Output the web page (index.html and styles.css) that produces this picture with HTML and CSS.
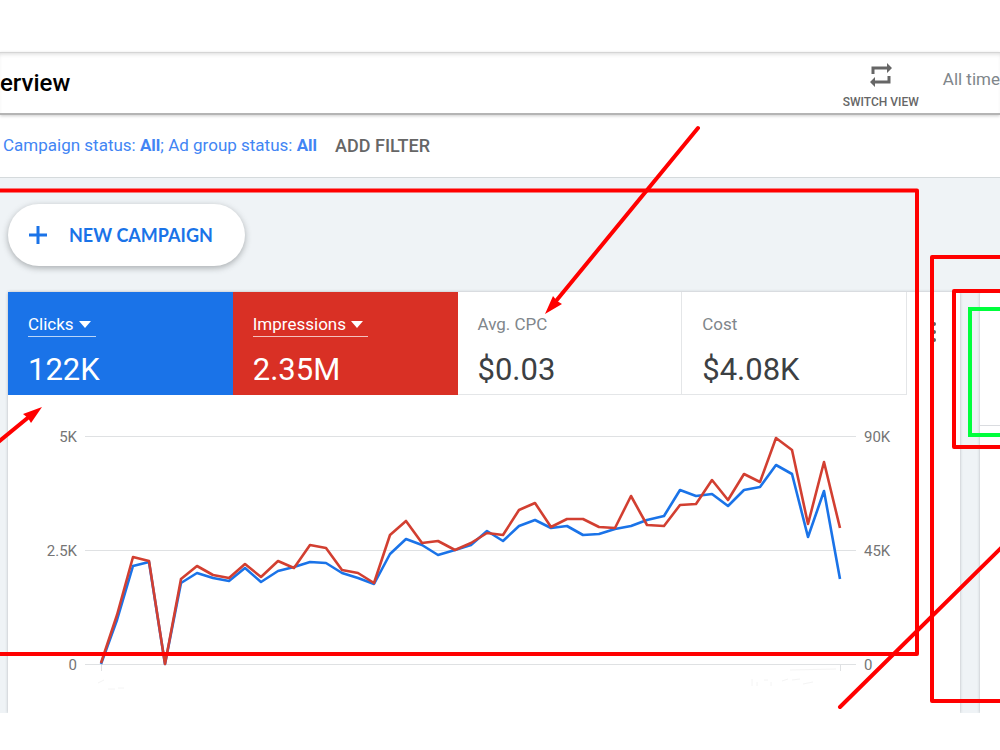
FILE: index.html
```html
<!DOCTYPE html>
<html lang="en">
  <head>
    <meta charset="UTF-8" />
    <title>Overview</title>
    <link rel="stylesheet" href="styles.css" />
  </head>
  <body>
    <div class="page">
      <header class="header">
        <h1 class="title">erview</h1>
        <button class="switch-view">
          <svg width="26" height="26" viewBox="0 0 26 26">
            <path d="M5 12V6h15M21 14v6H6" fill="none" stroke="#666" stroke-width="3" />
            <path d="M19 1l5 5-5 5zM7 15l-5 5 5 5z" fill="#666" />
          </svg>
          SWITCH VIEW
        </button>
        <span class="date-range">All time</span>
      </header>

      <div class="filters">
        <a href="#" class="filter-link">Campaign status: <b>All</b>; Ad group status: <b>All</b></a>
        <button class="add-filter">ADD FILTER</button>
      </div>

      <main class="content">
        <button class="new-campaign">
          <svg width="20" height="20" viewBox="0 0 20 20">
            <path d="M10 1v18M1 10h18" stroke="#1a73e8" stroke-width="3" />
          </svg>
          NEW CAMPAIGN
        </button>

        <div class="cards">
          <section class="card">
            <div class="summary">
              <div class="metrics">
                <div class="metric blue">
                  <button class="metric-label">Clicks <span class="caret"></span></button>
                  <div class="metric-value">122K</div>
                </div>
                <div class="metric red">
                  <button class="metric-label">Impressions <span class="caret"></span></button>
                  <div class="metric-value">2.35M</div>
                </div>
                <div class="metric">
                  <div class="metric-label">Avg. CPC</div>
                  <div class="metric-value">$0.03</div>
                </div>
                <div class="metric">
                  <div class="metric-label">Cost</div>
                  <div class="metric-value">$4.08K</div>
                </div>
              </div>
              <button class="more" aria-label="More">
                <svg width="6" height="22" viewBox="0 0 6 22" fill="#5f6368">
                  <circle cx="3" cy="3" r="2" />
                  <circle cx="3" cy="11" r="2" />
                  <circle cx="3" cy="19" r="2" />
                </svg>
              </button>
            </div>

            <svg class="chart" viewBox="8 395 952 318">
              <g class="grid">
                <path d="M85 436.500H856M85 550.500H856M85 664.500H856M101.500 664V671M840.500 664V671" />
              </g>
              <path class="faint" d="M790 670l46-1M98 683l6-3M108 689h7M118 688h6M752 686v-7M757 686v-4M764 680h4M771 686v-4M782 681l6-2M792 680l8-1M803 684l10-2" />
              <polyline class="line clicks" points="101,664 117,620 133,566 149,562 165,664 181,583 197,573 213,578 229,581 245,568 261,582 278,571 294,567 310,562 326,563 342,573 358,578 374,584 390,554 406,539 422,545 438,555 455,550 471,545 487,531 503,541 519,526 535,520 551,528 567,526 583,535 599,534 615,529 631,526 647,520 664,516 680,490 696,496 712,494 728,506 744,490 760,487 776,465 792,474 808,537 824,491 840,579" />
              <polyline class="line impressions" points="101,663 117,615 133,557 149,561 165,664 181,579 197,566 213,575 229,578 245,564 261,577 278,561 294,568 310,545 326,548 342,570 358,573 374,583 390,535 406,521 422,543 438,541 455,550 471,543 487,533 503,535 519,510 535,503 551,527 567,519 583,519 599,527 615,528 631,496 647,525 664,526 680,505 696,504 712,480 728,500 744,474 760,482 776,438 792,450 808,524 824,462 840,528" />
              <g class="axis" text-anchor="end">
                <text x="77" y="442">5K</text>
                <text x="77" y="556">2.5K</text>
                <text x="77" y="670">0</text>
              </g>
              <g class="axis">
                <text x="864" y="442">90K</text>
                <text x="864" y="556">45K</text>
                <text x="864" y="670">0</text>
              </g>
            </svg>
          </section>

          <section class="card side-card">
            <div class="side-head"></div>
          </section>
        </div>
      </main>

      <!-- markup drawn over the dashboard -->
      <svg class="notes" width="1000" height="750" viewBox="0 0 1000 750">
        <g fill="none" stroke="#f00" stroke-width="4" stroke-linejoin="round" stroke-linecap="round">
          <path d="M-5 190.500H917V654H-5" />
          <path d="M1005 257H932V701H1005" />
          <path d="M1005 291H954V447H1005" />
          <path d="M698 128L556 301M-4 444L30 416M840 707L1004 545" />
          <path d="M1005 309H970V435H1005" stroke="#00ff3c" stroke-linejoin="miter" />
        </g>
        <path d="M545 314L553 296 557 301 562 304zM42 407L23 414 28 418 31 423z" fill="#f00" />
      </svg>
    </div>
  </body>
</html>
```

FILE: styles.css
```css
* {
  box-sizing: border-box;
}
body {
  margin: 0;
  font-family: Roboto, "Liberation Sans", sans-serif;
  font-size: 16px;
  color: #3c4043;
  background-color: #fff;
}
button {
  padding: 0;
  border: none;
  background: none;
  font-family: inherit;
  cursor: pointer;
}
.page {
  position: relative;
  overflow: hidden;
  padding: 52px 0 37px;
}
.header {
  display: flex;
  align-items: center;
  height: 63px;
  border-top: 1px solid #d5d5d5;
  border-bottom: 2px solid #b4b4b4;
  box-shadow: inset 0 3px 4px -2px rgba(0, 0, 0, 0.15), 0 1px 3px rgba(0, 0, 0, 0.2);
}
.title {
  margin: 0 auto 0 0;
  font-size: 24px;
  line-height: 32px;
  font-weight: 500;
  color: #000;
}
.switch-view {
  display: flex;
  flex-direction: column;
  align-items: center;
  gap: 6px;
  margin-right: 24px;
  padding-top: 6px;
  font-size: 12px;
  line-height: 16px;
  font-weight: 500;
  color: #666;
}
.date-range {
  padding-bottom: 8px;
  font-size: 17px;
  line-height: 20px;
  color: #80868b;
  white-space: nowrap;
}
.filters {
  display: flex;
  align-items: center;
  gap: 18px;
  height: 63px;
  padding: 0 0 2px 3px;
  border-bottom: 1px solid #d5dadc;
}
.filter-link {
  font-size: 17px;
  color: #4285f4;
  text-decoration: none;
}
.add-filter {
  font-size: 18px;
  font-weight: 500;
  color: #666;
}
.content {
  padding: 26px 0 0 8px;
  background-color: #eff3f6;
  overflow: hidden;
}
.new-campaign {
  display: flex;
  align-items: center;
  gap: 21px;
  height: 62px;
  padding: 0 32px 0 20px;
  border-radius: 31px;
  background-color: #fff;
  box-shadow: 0 2px 6px rgba(60, 64, 67, 0.4);
  font-family: Lato, Roboto, sans-serif;
  font-size: 18px;
  font-weight: 700;
  color: #1a73e8;
}
.cards {
  display: grid;
  grid-template-columns: 1fr 20px;
  gap: 20px;
  margin-top: 26px;
}
.card {
  background-color: #fff;
  border-radius: 2px 2px 0 0;
  box-shadow: 0 0 3px rgba(60, 64, 67, 0.35);
}
.summary {
  display: flex;
}
.metrics {
  flex: 1;
  display: grid;
  grid-template-columns: repeat(4, 1fr);
}
.metric {
  height: 103px;
  padding: 20px 0 0 20px;
  border-right: 1px solid #e4e6e8;
  border-bottom: 1px solid #e4e6e8;
}
.blue,
.red {
  border: none;
  color: #fff;
}
.blue {
  background-color: #1a73e8;
}
.red {
  background-color: #d93025;
}
.metric-label {
  display: flex;
  align-items: center;
  gap: 5px;
  font-size: 17px;
  line-height: 24px;
  color: #80868b;
  border-bottom: 1px solid transparent;
}
button.metric-label {
  padding-right: 5px;
  color: #fff;
  border-bottom-color: rgba(255, 255, 255, 0.7);
}
.caret {
  border-left: 6px solid transparent;
  border-right: 6px solid transparent;
  border-top: 7px solid #fff;
}
.metric-value {
  margin-top: 13px;
  font-size: 31px;
  line-height: 40px;
}
.more {
  width: 53px;
  padding-bottom: 20px;
}
.chart {
  display: block;
  width: 100%;
}
.grid path {
  fill: none;
  stroke: #dfe1e3;
}
.faint {
  fill: none;
  stroke: #f4f4f4;
}
.axis {
  font-size: 15px;
  fill: #757575;
}
.line {
  fill: none;
  stroke-width: 2.6;
  stroke-linejoin: round;
}
.clicks {
  stroke: #1a73e8;
}
.impressions {
  stroke: #d23f31;
}
.side-head {
  height: 134px;
  border-bottom: 1px solid #dadce0;
}
.notes {
  position: absolute;
  top: 0;
  left: 0;
  pointer-events: none;
}
```
